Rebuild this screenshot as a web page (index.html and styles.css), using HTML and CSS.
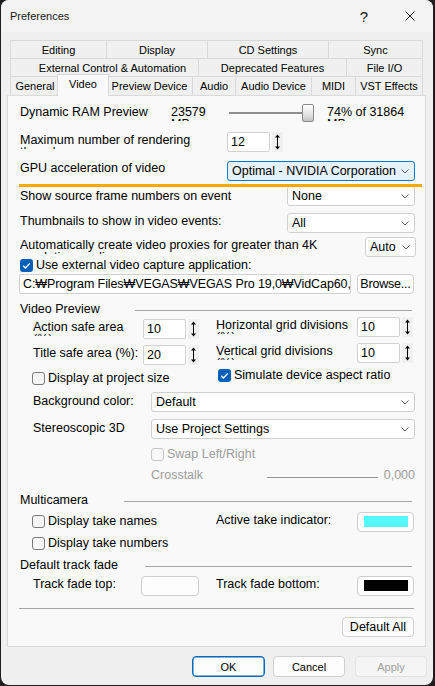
FILE: index.html
```html
<!DOCTYPE html>
<html>
<head>
<meta charset="utf-8">
<title>Preferences</title>
<link rel="stylesheet" href="styles.css">
</head>
<body>
<div class="window">
  <div class="titlebar">
    <span class="title">Preferences</span>
    <span class="cbtn help">?</span>
    <span class="cbtn close"><svg width="10" height="10" viewBox="0 0 10 10"><path d="M0.5 0.5L9.5 9.5M9.5 0.5L0.5 9.5" stroke="#1b1b1b" stroke-width="1" fill="none"/></svg></span>
  </div>

  <div class="tabs">
    <div class="tabrow r1"><div class="tab">Editing</div><div class="tab">Display</div><div class="tab">CD Settings</div><div class="tab">Sync</div></div>
    <div class="tabrow r2"><div class="tab ext">External Control &amp; Automation</div><div class="tab">Deprecated Features</div><div class="tab">File I/O</div></div>
    <div class="tabrow r3"><div class="tab">General</div><div class="tab sel">Video</div><div class="tab">Preview Device</div><div class="tab">Audio</div><div class="tab">Audio Device</div><div class="tab">MIDI</div><div class="tab">VST Effects</div></div>
  </div>

  <div class="panel">
    <div class="hl-line"></div>

    <div class="row ram">
      <div class="lbl w151">Dynamic RAM Preview</div>
      <div class="lbl clip w58">23579<br>MB</div>
      <div class="slider"><div class="track"></div><div class="thumb"></div></div>
      <div class="lbl clip ml13">74% of 31864<br>MB</div>
    </div>

    <div class="row mt10">
      <div class="lbl clip w207">Maximum number of rendering<br>threads:</div>
      <div class="input w43">12</div>
      <div class="spin"><svg width="11" height="20" viewBox="0 0 11 20"><path d="M5.5 4V16" stroke="#000" stroke-width="1"/><path d="M3 5.5L5.5 2.5L8 5.5Z M3 14.5L5.5 17.5L8 14.5Z" fill="#000"/></svg></div>
    </div>

    <div class="row mt9">
      <div class="lbl m1 w207">GPU acceleration of video</div>
      <div class="combo focus w188"><span>Optimal - NVIDIA Corporation</span><svg class="chev" width="8" height="5" viewBox="0 0 8 5"><path d="M0.5 0.5L4 4L7.5 0.5" fill="none" stroke="#5a5a5a"/></svg></div>
    </div>

    <div class="row mt5">
      <div class="lbl m4 w267">Show source frame numbers on event</div>
      <div class="combo w128"><span>None</span><svg class="chev" width="8" height="5" viewBox="0 0 8 5"><path d="M0.5 0.5L4 4L7.5 0.5" fill="none" stroke="#5a5a5a"/></svg></div>
    </div>

    <div class="row mt7">
      <div class="lbl w267">Thumbnails to show in video events:</div>
      <div class="combo w128"><span>All</span><svg class="chev" width="8" height="5" viewBox="0 0 8 5"><path d="M0.5 0.5L4 4L7.5 0.5" fill="none" stroke="#5a5a5a"/></svg></div>
    </div>

    <div class="row mt4">
      <div class="lbl clip w345">Automatically create video proxies for greater than 4K<br>resolution media:</div>
      <div class="combo w51"><span>Auto</span><svg class="chev" width="8" height="5" viewBox="0 0 8 5"><path d="M0.5 0.5L4 4L7.5 0.5" fill="none" stroke="#5a5a5a"/></svg></div>
    </div>

    <div class="chkrow h15 mt1">
      <div class="chk on"><svg width="13" height="13" viewBox="0 0 13 13"><path d="M3.2 6.8L5.4 9L9.8 4.4" fill="none" stroke="#fff" stroke-width="1.3"/></svg></div>
      <span class="chklbl">Use external video capture application:</span>
    </div>

    <div class="row mt1">
      <div class="input path"><span class="pathtxt">C:₩Program Files₩VEGAS₩VEGAS Pro 19,0₩VidCap60,exe</span></div>
      <div class="btn browse">Browse...</div>
    </div>

    <div class="hdr mt9"><span>Video Preview</span><div class="hline w277"></div></div>

    <div class="sec">
      <div class="col left pt2">
        <div class="row">
          <div class="lbl clip w110">Action safe area<br>(%):</div>
          <div class="input w43">10</div>
          <div class="spin"><svg width="11" height="20" viewBox="0 0 11 20"><path d="M5.5 4V16" stroke="#000" stroke-width="1"/><path d="M3 5.5L5.5 2.5L8 5.5Z M3 14.5L5.5 17.5L8 14.5Z" fill="#000"/></svg></div>
        </div>
        <div class="row mt6">
          <div class="lbl w110">Title safe area (%):</div>
          <div class="input w43">20</div>
          <div class="spin"><svg width="11" height="20" viewBox="0 0 11 20"><path d="M5.5 4V16" stroke="#000" stroke-width="1"/><path d="M3 5.5L5.5 2.5L8 5.5Z M3 14.5L5.5 17.5L8 14.5Z" fill="#000"/></svg></div>
        </div>
        <div class="chkrow mt7">
          <div class="chk nl1"></div>
          <span class="chklbl">Display at project size</span>
        </div>
      </div>
      <div class="col right">
        <div class="row">
          <div class="lbl clip w141">Horizontal grid divisions<br>(%):</div>
          <div class="input w43">10</div>
          <div class="spin"><svg width="11" height="20" viewBox="0 0 11 20"><path d="M5.5 4V16" stroke="#000" stroke-width="1"/><path d="M3 5.5L5.5 2.5L8 5.5Z M3 14.5L5.5 17.5L8 14.5Z" fill="#000"/></svg></div>
        </div>
        <div class="row mt6">
          <div class="lbl clip w141">Vertical grid divisions<br>(%):</div>
          <div class="input w43">10</div>
          <div class="spin"><svg width="11" height="20" viewBox="0 0 11 20"><path d="M5.5 4V16" stroke="#000" stroke-width="1"/><path d="M3 5.5L5.5 2.5L8 5.5Z M3 14.5L5.5 17.5L8 14.5Z" fill="#000"/></svg></div>
        </div>
        <div class="chkrow mt6">
          <div class="chk on ml2"><svg width="13" height="13" viewBox="0 0 13 13"><path d="M3.2 6.8L5.4 9L9.8 4.4" fill="none" stroke="#fff" stroke-width="1.3"/></svg></div>
          <span class="chklbl">Simulate device aspect ratio</span>
        </div>
      </div>
    </div>

    <div class="row ind mt7">
      <div class="lbl m3 w118">Background color:</div>
      <div class="combo w264"><span>Default</span><svg class="chev" width="8" height="5" viewBox="0 0 8 5"><path d="M0.5 0.5L4 4L7.5 0.5" fill="none" stroke="#5a5a5a"/></svg></div>
    </div>

    <div class="row ind mt7">
      <div class="lbl m3 w118">Stereoscopic 3D</div>
      <div class="combo w264"><span>Use Project Settings</span><svg class="chev" width="8" height="5" viewBox="0 0 8 5"><path d="M0.5 0.5L4 4L7.5 0.5" fill="none" stroke="#5a5a5a"/></svg></div>
    </div>

    <div class="chkrow far mt9">
      <div class="chk dis"></div>
      <span class="chklbl dis">Swap Left/Right</span>
    </div>

    <div class="xrow far mt8">
      <div class="lbl m0 dis w116">Crosstalk</div>
      <div class="xline"></div>
      <div class="xval dis">0,000</div>
    </div>

    <div class="hdr mt11"><span>Multicamera</span><div class="hline w288"></div></div>

    <div class="sec">
      <div class="col left pt7">
        <div class="chkrow">
          <div class="chk nl1"></div>
          <span class="chklbl">Display take names</span>
        </div>
        <div class="chkrow mt9">
          <div class="chk nl1"></div>
          <span class="chklbl">Display take numbers</span>
        </div>
      </div>
      <div class="col right pt4">
        <div class="row">
          <div class="lbl w141">Active take indicator:</div>
          <div class="colorbtn w57"><div class="swatch cyan"></div></div>
        </div>
      </div>
    </div>

    <div class="hdr mt9"><span>Default track fade</span><div class="hline w267"></div></div>

    <div class="row ind mt3">
      <div class="lbl w108">Track fade top:</div>
      <div class="colorbtn w58"><div class="swatch white"></div></div>
      <div class="gap17"></div>
      <div class="lbl w141">Track fade bottom:</div>
      <div class="colorbtn w57"><div class="swatch black"></div></div>
    </div>

    <div class="sep mt12"></div>

    <div class="row end mt8">
      <div class="btn w72">Default All</div>
    </div>
  </div>

  <div class="footer">
    <div class="dbtn ok">OK</div>
    <div class="dbtn cancel">Cancel</div>
    <div class="dbtn apply">Apply</div>
  </div>
</div>
</body>
</html>
```

FILE: styles.css
```css
* { box-sizing: border-box; }
html, body { margin: 0; padding: 0; }
body {
  background: #1e1e1e;
  width: 435px;
  height: 686px;
  overflow: hidden;
  font-family: "Liberation Sans", "DejaVu Sans", Arial, sans-serif;
  color: #000;
}
.window {
  margin-left: 1px;
  width: 432px;
  height: 685px;
  background: #f0f0f0;
  border-radius: 8px;
  overflow: hidden;
}
.titlebar {
  height: 32px;
  display: flex;
  align-items: center;
  background: #f3f3f3;
}
.title { flex: 1; padding-left: 9px; font-size: 11px; color: #1a1a1a; }
.cbtn {
  width: 46px;
  height: 32px;
  display: flex;
  align-items: center;
  justify-content: center;
  color: #1a1a1a;
}
.help { font-size: 15px; }

/* tabs */
.tabs { margin: 8px 0 0 9px; width: 413px; font-size: 11px; }
.tabrow {
  display: grid;
  width: 413px;
  border-left: 1px solid #d9d9d9;
  border-top: 1px solid #d9d9d9;
}
.r1 { height: 18px; grid-template-columns: 96px 101px 121px 94px; }
.r2 { height: 18px; grid-template-columns: 188px 148px 76px; }
.r3 { height: 19px; grid-template-columns: 49px 47px 86px 43px 76px 44px 67px; }
.tab {
  border-right: 1px solid #d9d9d9;
  display: flex;
  align-items: center;
  justify-content: center;
  white-space: nowrap;
  background: #f0f0f0;
}
.tab.ext { padding-left: 16px; }
.tab.sel {
  margin: -3px -2px -1px -3px;
  border: 1px solid #d9d9d9;
  border-bottom: none;
  background: #f9f9f9;
  position: relative;
  z-index: 1;
  padding-bottom: 3px;
}

/* panel */
.panel {
  margin-left: 6px;
  width: 419px;
  height: 552px;
  border: 1px solid #dadada;
  background: #f9f9f9;
  position: relative;
  padding: 0 10px 0 12px;
  font-size: 12.5px;
}
.hl-line {
  position: absolute;
  left: 11px;
  top: 88px;
  width: 403px;
  height: 3px;
  background: #ffa800;
  z-index: 2;
}
.row { display: flex; height: 20px; align-items: center; }
.row.ram { height: 18px; margin-top: 8px; }
.row.ind { padding-left: 13px; }
.row.end { justify-content: flex-end; padding-right: 1px; }
.lbl {
  align-self: flex-start;
  line-height: 12px;
  margin-top: 2px;
  white-space: nowrap;
  flex: none;
}
.lbl.clip { height: 15px; overflow: hidden; margin-top: 2px; }
.lbl.m0 { margin-top: 0; }
.lbl.m1 { margin-top: 1px; }
.lbl.m3 { margin-top: 3px; }
.lbl.m4 { margin-top: 4px; }

.mt1 { margin-top: 1px; }
.mt3 { margin-top: 3px; }
.mt4 { margin-top: 4px; }
.mt5 { margin-top: 5px; }
.mt6 { margin-top: 6px; }
.mt7 { margin-top: 7px; }
.mt8 { margin-top: 8px; }
.mt9 { margin-top: 9px; }
.mt10 { margin-top: 10px; }
.mt11 { margin-top: 11px; }
.mt12 { margin-top: 12px; }
.ml13 { margin-left: 13px; }
.ml2 { margin-left: 2px; }
.nl1 { margin-left: -1px; }
.pt2 { padding-top: 2px; }
.pt4 { padding-top: 4px; }
.pt7 { padding-top: 7px; }

.w43 { width: 43px; }
.w51 { width: 51px; }
.w57 { width: 57px; }
.w58 { width: 58px; }
.w72 { width: 72px; }
.w108 { width: 108px; }
.w110 { width: 110px; }
.w116 { width: 116px; }
.w118 { width: 118px; }
.w128 { width: 128px; }
.w141 { width: 141px; }
.w151 { width: 151px; }
.w188 { width: 188px; }
.w207 { width: 207px; }
.w264 { width: 264px; }
.w267 { width: 267px; }
.w277 { width: 277px; }
.w288 { width: 288px; }
.w345 { width: 345px; }
.gap17 { width: 17px; flex: none; }

/* slider */
.slider { width: 85px; height: 18px; display: flex; align-items: center; flex: none; }
.track { flex: 1; height: 2px; background: #8f8f8f; margin-right: -1px; }
.thumb {
  width: 12px;
  height: 18px;
  border: 1px solid #8a8a8a;
  border-radius: 2px;
  background: linear-gradient(#ffffff, #e6e6e6 55%, #c4c4c4);
}

/* inputs */
.input {
  height: 20px;
  flex: none;
  border: 1px solid #d2d2d2;
  border-radius: 2px;
  background: #fff;
  display: flex;
  align-items: center;
  padding-left: 3px;
  white-space: nowrap;
  overflow: hidden;
}
.input.path { width: 332px; margin-left: -1px; padding-left: 3px; }
.pathtxt { letter-spacing: -0.1px; }
.spin {
  width: 11px;
  height: 20px;
  margin-left: 2px;
  background: #f0f0f0;
  flex: none;
}
.spin svg { display: block; }

.combo {
  height: 20px;
  flex: none;
  border: 1px solid #d0d0d0;
  border-radius: 3px;
  background: #fff;
  display: flex;
  align-items: center;
  padding-left: 4px;
  white-space: nowrap;
}
.combo.focus { background: #e5f1fb; border-color: #0078d4; }
.chev { margin-left: auto; margin-right: 5px; flex: none; }

.btn {
  height: 20px;
  flex: none;
  border: 1px solid #d0d0d0;
  border-radius: 4px;
  background: #fdfdfd;
  display: flex;
  align-items: center;
  justify-content: center;
  white-space: nowrap;
}
.btn.browse { width: 57px; margin-left: 6px; letter-spacing: -0.2px; }

/* checkboxes */
.chkrow { display: flex; align-items: center; height: 13px; }
.chkrow.h15 { height: 15px; }
.chkrow.far, .xrow.far { margin-left: 131px; }
.chk {
  width: 13px;
  height: 13px;
  flex: none;
  border: 1px solid #7a7a7a;
  border-radius: 3px;
  background: #f5f5f5;
}
.chk.on { border: none; background: #005fb8; }
.chk.on svg { display: block; }
.chk.dis { border-color: #c6c6c6; background: #f7f7f7; }
.chklbl { margin-left: 3px; line-height: 13px; white-space: nowrap; }
.dis { color: #9d9d9d; }

/* crosstalk */
.xrow { display: flex; height: 14px; }
.xline { width: 111px; height: 1px; background: #929292; margin-top: 8px; flex: none; }
.xval { flex: 1; text-align: right; line-height: 12px; }

/* headers */
.hdr { display: flex; height: 14px; }
.hdr span { line-height: 12px; white-space: nowrap; }
.hline { height: 1px; background: #a5a5a5; margin-top: 7px; margin-left: auto; margin-right: 3px; flex: none; }

.sec { display: flex; padding-left: 13px; }
.col.left { width: 183px; flex: none; }
.col.right { width: 199px; flex: none; }

.colorbtn {
  height: 20px;
  flex: none;
  border: 1px solid #cfcfcf;
  border-radius: 4px;
  background: #fdfdfd;
  padding: 3px 5px 4px 6px;
}
.swatch { height: 100%; }
.swatch.cyan { background: #55f8ff; }
.swatch.white { background: #fdfdfd; }
.swatch.black { background: #000; }

.sep { height: 1px; background: #a5a5a5; width: 395px; margin-left: -1px; }

/* footer */
.footer {
  display: flex;
  justify-content: flex-end;
  padding: 9px 6px 0 0;
  font-size: 11px;
}
.dbtn {
  height: 21px;
  border: 1px solid #d0d0d0;
  border-radius: 4px;
  background: #fdfdfd;
  display: flex;
  align-items: center;
  justify-content: center;
}
.dbtn.ok { width: 73px; margin-right: 8px; border-color: #0067c0; box-shadow: inset 0 0 0 0.5px #0067c0; }
.dbtn.cancel { width: 72px; margin-right: 10px; }
.dbtn.apply { width: 72px; background: #f5f5f5; border-color: #e3e3e3; color: #a0a0a0; }
```
